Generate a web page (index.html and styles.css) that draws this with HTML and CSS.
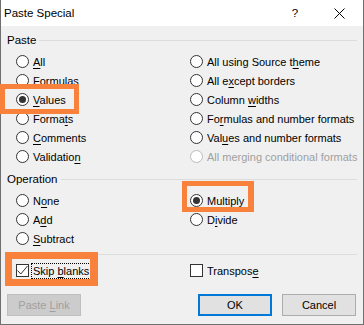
FILE: index.html
```html
<!DOCTYPE html>
<html lang="en">
<head>
    <meta charset="UTF-8">
    <title>Paste Special</title>
    <link rel="stylesheet" href="styles.css">
</head>
<body>
<div class="dialog">

    <!-- title bar -->
    <div class="titlebar">
        <span class="title">Paste Special</span>
        <span class="help">?</span>
        <svg class="close" width="11" height="11" viewBox="0 0 11 11">
            <path d="M0.5 0.5 L10.5 10.5 M10.5 0.5 L0.5 10.5" stroke="#000" stroke-width="1"/>
        </svg>
    </div>

    <div class="content">
        <!-- paste group -->
        <div class="group-head"><span>Paste</span><div class="rule"></div></div>
        <div class="options">
            <label class="opt"><span class="radio"></span><span><u>A</u>ll</span></label>
            <label class="opt"><span class="radio"></span><span>All using Source t<u>h</u>eme</span></label>
            <label class="opt"><span class="radio"></span><span><u>F</u>ormulas</span></label>
            <label class="opt"><span class="radio"></span><span>All e<u>x</u>cept borders</span></label>
            <label class="opt"><span class="radio checked"></span><span><u>V</u>alues</span></label>
            <label class="opt"><span class="radio"></span><span>Column <u>w</u>idths</span></label>
            <label class="opt"><span class="radio"></span><span>Forma<u>t</u>s</span></label>
            <label class="opt"><span class="radio"></span><span>Fo<u>r</u>mulas and number formats</span></label>
            <label class="opt"><span class="radio"></span><span><u>C</u>omments</span></label>
            <label class="opt"><span class="radio"></span><span>Val<u>u</u>es and number formats</span></label>
            <label class="opt"><span class="radio"></span><span>Validatio<u>n</u></span></label>
            <label class="opt disabled"><span class="radio"></span><span>All merging conditional formats</span></label>
        </div>

        <!-- operation group -->
        <div class="group-head op"><span>Operation</span><div class="rule"></div></div>
        <div class="options">
            <label class="opt"><span class="radio"></span><span>N<u>o</u>ne</span></label>
            <label class="opt"><span class="radio checked"></span><span><u>M</u>ultiply</span></label>
            <label class="opt"><span class="radio"></span><span>A<u>d</u>d</span></label>
            <label class="opt"><span class="radio"></span><span>D<u>i</u>vide</span></label>
            <label class="opt"><span class="radio"></span><span><u>S</u>ubtract</span></label>
        </div>

        <div class="separator"></div>

        <div class="options checks">
            <label class="opt"><span class="check">
                <svg width="11" height="11" viewBox="0 0 11 11"><path d="M0.5 5.5 L3.8 9 L10.5 1" fill="none" stroke="#333" stroke-width="1"/></svg>
            </span><span class="focus">Skip <u>b</u>lanks</span></label>
            <label class="opt"><span class="check"></span><span>Transpos<u>e</u></span></label>
        </div>

        <div class="buttons">
            <button class="btn" disabled>Paste <u>L</u>ink</button>
            <button class="btn default">OK</button>
            <button class="btn cancel">Cancel</button>
        </div>
    </div>

    <!-- highlight frames drawn over the dialog -->
    <div class="mark mark-values"></div>
    <div class="mark mark-multiply"></div>
    <div class="mark mark-skip"></div>
</div>
</body>
</html>
```

FILE: styles.css
```css
body {
    margin: 0;
    font-family: "Liberation Sans", Arial, sans-serif;
    font-size: 11px;
    color: #000;
    background: #fff;
}
u {
    text-underline-offset: 2px;
}
.dialog {
    position: relative;
    width: 364px;
    height: 325px;
    box-sizing: border-box;
    border: 1px solid #6f6f6f;
    border-top: none;
    background: #f0f0f0;
}
.titlebar {
    height: 26px;
    display: flex;
    align-items: center;
    padding-left: 3px;
    background: #fff;
    font-size: 11.5px;
}
.title {
    flex: 1;
}
.help {
    width: 12px;
    text-align: center;
    margin-right: 33px;
}
.close {
    margin-right: 18px;
}
.content {
    padding: 0 6px;
}
.group-head {
    display: flex;
    align-items: center;
    gap: 3px;
    height: 14px;
    margin-top: 7px;
    font-size: 11.5px;
}
.group-head.op {
    margin-top: 6px;
}
.rule {
    flex: 1;
    height: 1px;
    background: #dcdcdc;
}
.options {
    display: grid;
    grid-template-columns: 174px 1fr;
    margin: 5px 0 0 9px;
}
.opt {
    height: 19px;
    display: flex;
    align-items: center;
    gap: 4px;
    white-space: nowrap;
}
.radio {
    width: 13px;
    height: 13px;
    box-sizing: border-box;
    border: 1px solid #333;
    border-radius: 50%;
    background: #fff;
    display: flex;
    align-items: center;
    justify-content: center;
}
.radio.checked::after {
    content: "";
    width: 7px;
    height: 7px;
    border-radius: 50%;
    background: #333;
}
.disabled {
    color: #a0a0a0;
}
.disabled .radio {
    border-color: #bcbcbc;
}
.separator {
    height: 1px;
    background: #dcdcdc;
    margin-top: 6px;
}
.checks {
    margin-top: 6px;
}
.check {
    width: 13px;
    height: 13px;
    box-sizing: border-box;
    border: 1px solid #333;
    background: #fff;
    display: flex;
    align-items: center;
    justify-content: center;
}
.focus {
    border: 1px dotted #000;
    padding: 1px 1px;
    margin-left: -2px;
}
.buttons {
    display: flex;
    margin-top: 14px;
}
.btn {
    width: 74px;
    height: 22px;
    box-sizing: border-box;
    font-family: inherit;
    font-size: 11px;
    background: #e1e1e1;
    border: 1px solid #adadad;
    padding: 0;
    color: #000;
}
.btn:disabled {
    background: #cccccc;
    border-color: #bfbfbf;
    color: #a0a0a0;
}
.btn.default {
    margin-left: auto;
    border: 2px solid #0078d7;
}
.btn.cancel {
    margin-left: 10px;
    margin-right: 1px;
}
.mark {
    position: absolute;
    box-sizing: border-box;
    border-style: solid;
    border-color: #f8823c;
    pointer-events: none;
}
.mark-values {
    left: -1px;
    top: 84px;
    width: 79px;
    height: 30px;
    border-width: 5px;
}
.mark-multiply {
    left: 181px;
    top: 181px;
    width: 72px;
    height: 31px;
    border-width: 5px 6px 5px 5px;
}
.mark-skip {
    left: 4px;
    top: 252px;
    width: 93px;
    height: 34px;
    border-width: 7px 8px 7px 7px;
}
```
